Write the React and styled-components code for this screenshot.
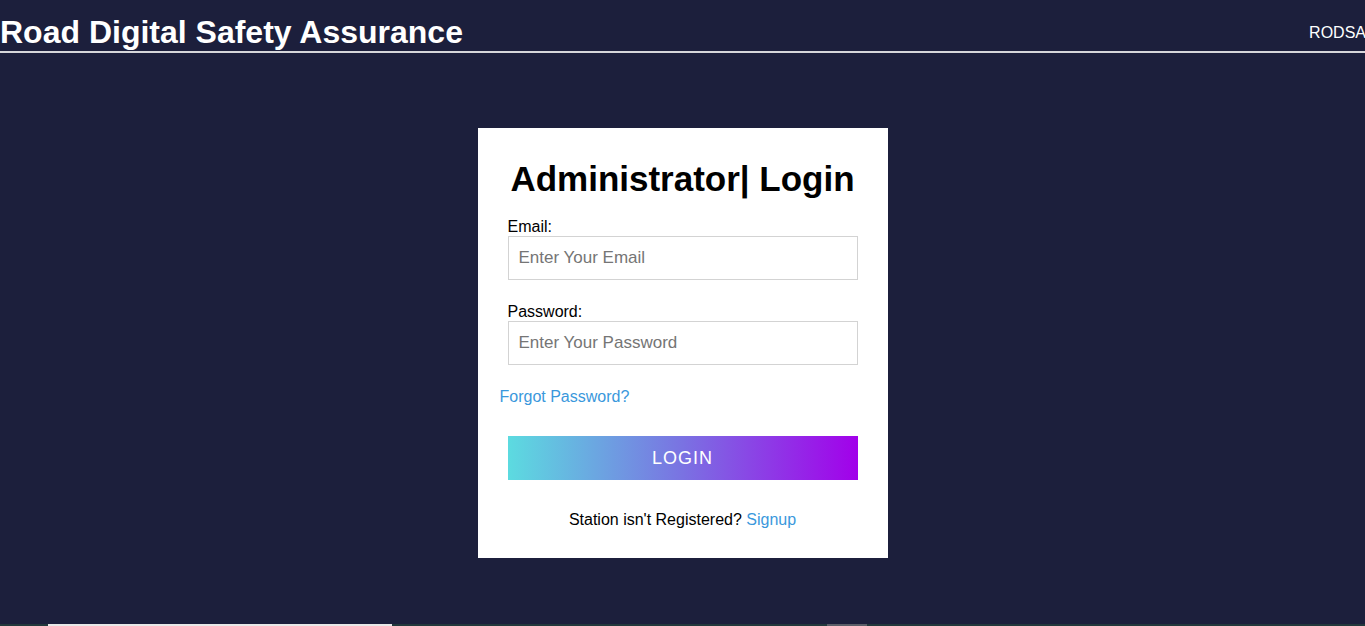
import React from "react";
import styled, { createGlobalStyle } from "styled-components";

const Global = createGlobalStyle`
  * { box-sizing: border-box; }
  html, body { margin: 0; padding: 0; }
  body {
    background: #1c1f3c;
    font-family: "Liberation Sans", Arial, sans-serif;
    overflow: hidden;
  }
`;

const Page = styled.div`
  min-height: 100vh;
  display: flex;
  flex-direction: column;
`;

const Header = styled.header`
  display: flex;
  align-items: center;
  justify-content: space-between;
  padding-top: 14px;
  border-bottom: 2px solid #d6d6da;
  color: #ffffff;
`;

const Title = styled.h1`
  margin: 0;
  font-size: 32px;
  line-height: 37px;
  font-weight: 700;
`;

const Brand = styled.span`
  font-size: 16px;
  line-height: 18px;
  margin-right: -1px;
`;

const Main = styled.main`
  flex: 1;
  display: flex;
  justify-content: center;
  align-items: flex-start;
  padding-top: 75px;
`;

const Card = styled.form`
  width: 410px;
  background: #ffffff;
  padding: 31px 30px 29px;
  display: flex;
  flex-direction: column;
`;

const Heading = styled.h2`
  margin: 0 0 19px;
  text-align: center;
  font-size: 35px;
  line-height: 40px;
  font-weight: 700;
  color: #000;
`;

const Label = styled.label`
  display: block;
  font-size: 16px;
  line-height: 18px;
  color: #000;
`;

const Field = styled.div`
  display: flex;
  flex-direction: column;
  margin-bottom: ${(p) => p.$gap || 0}px;
`;

const Input = styled.input`
  height: 44px;
  width: 100%;
  border: 1px solid #d3d3d3;
  padding: 0 10px;
  font-family: inherit;
  font-size: 17px;
  color: #333;
  outline: none;
  &::placeholder { color: #757575; }
`;

const LinkText = styled.a`
  color: #3a98dc;
  text-decoration: none;
  font-size: 16px;
  line-height: 18px;
  cursor: pointer;
`;

const Forgot = styled(LinkText)`
  display: block;
  margin: 23px 0 0 -8px;
`;

const LoginButton = styled.button`
  margin-top: 30px;
  height: 44px;
  width: 100%;
  border: none;
  background: linear-gradient(90deg, #5cdbe0 0%, #7a72e2 50%, #a200ea 100%);
  color: #ffffff;
  font-family: inherit;
  font-size: 18px;
  letter-spacing: 1px;
  cursor: pointer;
`;

const Footnote = styled.p`
  margin: 31px 0 0;
  text-align: center;
  font-size: 16px;
  line-height: 18px;
  color: #000;
`;

const Strip = styled.div`
  height: 2px;
  background: #22383c;
  display: flex;
`;

const StripItem = styled.span`
  display: block;
  width: ${(p) => p.$w}px;
  margin-left: ${(p) => p.$ml}px;
  background: ${(p) => p.$c};
`;

export default function App() {
  return (
    <Page>
      <Global />
      <Header>
        <Title>Road Digital Safety Assurance</Title>
        <Brand>RODSA</Brand>
      </Header>
      <Main>
        <Card onSubmit={(e) => e.preventDefault()}>
          <Heading>Administrator| Login</Heading>
          <Field $gap={23}>
            <Label htmlFor="email">Email:</Label>
            <Input id="email" type="email" placeholder="Enter Your Email" />
          </Field>
          <Field>
            <Label htmlFor="password">Password:</Label>
            <Input id="password" type="password" placeholder="Enter Your Password" />
          </Field>
          <Forgot>Forgot Password?</Forgot>
          <LoginButton type="submit">LOGIN</LoginButton>
          <Footnote>
            Station isn't Registered? <LinkText>Signup</LinkText>
          </Footnote>
        </Card>
      </Main>
      <Strip>
        <StripItem $ml={48} $w={344} $c="#e8e8e8" />
        <StripItem $ml={435} $w={40} $c="#5a5e68" />
      </Strip>
    </Page>
  );
}
